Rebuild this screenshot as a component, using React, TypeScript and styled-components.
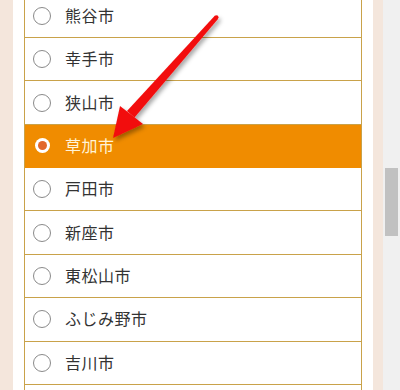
import React from "react";
import styled, { createGlobalStyle } from "styled-components";

const GlobalStyle = createGlobalStyle`
  html, body {
    margin: 0;
    padding: 0;
    background: #ffffff;
    overflow: hidden;
  }
  body {
    font-family: "Noto Sans CJK JP", "Noto Sans", sans-serif;
  }
`;

const cities = [
  "熊谷市",
  "幸手市",
  "狭山市",
  "草加市",
  "戸田市",
  "新座市",
  "東松山市",
  "ふじみ野市",
  "吉川市",
];

const Page = styled.div`
  position: relative;
  display: flex;
  width: 400px;
  height: 390px;
  overflow: hidden;
`;

const Gutter = styled.div<{ $w: number }>`
  flex: 0 0 ${(p) => p.$w}px;
  background: #f4e6dc;
`;

const Content = styled.div`
  flex: 1;
  padding: 0 11px;
  background: #ffffff;
`;

const List = styled.ul`
  list-style: none;
  margin: -5.4px 0 0;
  padding: 0 0 20px;
  border-left: 1px solid #c9a24a;
  border-right: 1px solid #c9a24a;
`;

const Row = styled.li<{ $active?: boolean }>`
  display: flex;
  align-items: center;
  gap: 14px;
  height: 42.375px;
  padding-left: 8px;
  border-bottom: 1px solid ${(p) => (p.$active ? "#f08c00" : "#c9a24a")};
  background: ${(p) => (p.$active ? "#f08c00" : "#ffffff")};
  color: ${(p) => (p.$active ? "#fff3d6" : "#333333")};
  font-size: 16px;
  letter-spacing: 0.5px;
`;

const Label = styled.span`
  line-height: 1;
  margin-top: -2px;
`;

const RadioSlot = styled.span`
  flex: 0 0 18px;
  height: 18px;
  display: flex;
  align-items: center;
  justify-content: center;
`;

const Radio = styled.span<{ $on?: boolean }>`
  box-sizing: border-box;
  width: ${(p) => (p.$on ? 15 : 18)}px;
  height: ${(p) => (p.$on ? 15 : 18)}px;
  border-radius: 50%;
  background: #ffffff;
  border: ${(p) => (p.$on ? "none" : "1px solid #8a8a8a")};
  display: flex;
  align-items: center;
  justify-content: center;
  &::after {
    content: "";
    display: ${(p) => (p.$on ? "block" : "none")};
    width: 9px;
    height: 9px;
    border-radius: 50%;
    background: #e2682c;
  }
`;

const Track = styled.div`
  flex: 0 0 17px;
  background: #f0f0f0;
  padding: 168px 2px 0;
  box-sizing: border-box;
`;

const Thumb = styled.div`
  height: 68px;
  background: #c1c1c1;
`;

const ArrowLayer = styled.svg`
  position: absolute;
  left: 0;
  top: 0;
  pointer-events: none;
`;

const Arrow = () => (
  <ArrowLayer width="400" height="390" viewBox="0 0 400 390">
    <defs>
      <filter id="sh" x="-20%" y="-20%" width="140%" height="140%">
        <feDropShadow dx="2" dy="3" stdDeviation="2" floodColor="#000" floodOpacity="0.35" />
      </filter>
    </defs>
    <g filter="url(#sh)" fill="#f20d0d">
      <polygon points="218,19 215,15.5 127,111 134.5,117.5" />
      <circle cx="216.5" cy="17.2" r="2" />
      <polygon points="113,138 120,106 131,114.5 143,124" />
    </g>
  </ArrowLayer>
);

export default function App() {
  return (
    <>
      <GlobalStyle />
      <Page>
        <Gutter $w={13} />
        <Content>
          <List>
            {cities.map((c) => {
              const on = c === "草加市";
              return (
                <Row key={c} $active={on}>
                  <RadioSlot>
                    <Radio $on={on} />
                  </RadioSlot>
                  <Label>{c}</Label>
                </Row>
              );
            })}
          </List>
        </Content>
        <Gutter $w={10} />
        <Track>
          <Thumb />
        </Track>
        <Arrow />
      </Page>
    </>
  );
}
